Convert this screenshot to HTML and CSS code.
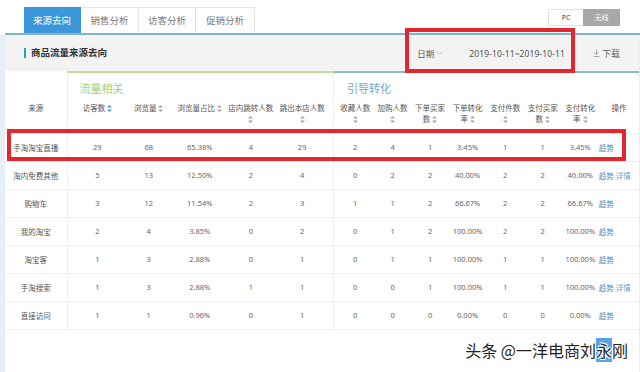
FILE: index.html
```html
<!DOCTYPE html>
<html lang="zh-CN">
<head>
	<meta charset="UTF-8">
	<meta name="viewport" content="width=device-width, initial-scale=1.0">
	<title>来源去向</title>
	<link rel="stylesheet" href="styles.css">
</head>
<body>
	<div class="page">
		<div class="topbar">
			<ul class="tabs">
				<li class="active">来源去向</li>
				<li>销售分析</li>
				<li>访客分析</li>
				<li>促销分析</li>
			</ul>
			<div class="switch"><span class="pc">PC</span><span class="wx">无线</span></div>
		</div>

		<div class="main">
			<div class="panel">
				<div class="panel-head">
					<h2 class="title">商品流量来源去向</h2>
					<div class="tools">
						<span class="date-label">日期<svg class="chev" width="7" height="4" viewBox="0 0 7 4"><polyline points="0.5,0.5 3.5,3.5 6.5,0.5"/></svg></span>
						<span class="date-range">2019-10-11~2019-10-11</span>
						<span class="download"><svg width="7" height="8" viewBox="0 0 7 8"><path d="M3.5 0.5V5.5M1.2 3.3L3.5 5.6L5.8 3.3M0.5 7.5H6.5"/></svg>下载</span>
					</div>
				</div>

				<table class="data">
					<colgroup>
						<col style="width:62px">
						<col style="width:56px"><col style="width:51px"><col style="width:51px"><col style="width:51px"><col style="width:57px">
						<col style="width:40px"><col style="width:38px"><col style="width:37px"><col style="width:38px"><col style="width:37px"><col style="width:38px"><col style="width:37px"><col style="width:40px">
					</colgroup>
					<thead>
						<tr class="group-row">
							<th></th>
							<th colspan="5" class="grp grp-flow">流量相关</th>
							<th colspan="8" class="grp grp-guide">引导转化</th>
						</tr>
						<tr class="label-row">
							<th>来源</th>
							<th class="first g1">访客数 <svg class="sort on" width="5" height="7" viewBox="0 0 5 7"><path d="M2.5 0L5 2.6H0ZM2.5 7L5 4.4H0Z"/></svg></th>
							<th>浏览量 <svg class="sort" width="5" height="7" viewBox="0 0 5 7"><path d="M2.5 0L5 2.6H0ZM2.5 7L5 4.4H0Z"/></svg></th>
							<th>浏览量占比 <svg class="sort" width="5" height="7" viewBox="0 0 5 7"><path d="M2.5 0L5 2.6H0ZM2.5 7L5 4.4H0Z"/></svg></th>
							<th>店内跳转人数<br><svg class="sort" width="5" height="7" viewBox="0 0 5 7"><path d="M2.5 0L5 2.6H0ZM2.5 7L5 4.4H0Z"/></svg></th>
							<th class="last">跳出本店人数<br><svg class="sort" width="5" height="7" viewBox="0 0 5 7"><path d="M2.5 0L5 2.6H0ZM2.5 7L5 4.4H0Z"/></svg></th>
							<th class="first g2">收藏人数<br><svg class="sort" width="5" height="7" viewBox="0 0 5 7"><path d="M2.5 0L5 2.6H0ZM2.5 7L5 4.4H0Z"/></svg></th>
							<th>加购人数<br><svg class="sort" width="5" height="7" viewBox="0 0 5 7"><path d="M2.5 0L5 2.6H0ZM2.5 7L5 4.4H0Z"/></svg></th>
							<th>下单买家<br>数 <svg class="sort" width="5" height="7" viewBox="0 0 5 7"><path d="M2.5 0L5 2.6H0ZM2.5 7L5 4.4H0Z"/></svg></th>
							<th>下单转化<br>率 <svg class="sort" width="5" height="7" viewBox="0 0 5 7"><path d="M2.5 0L5 2.6H0ZM2.5 7L5 4.4H0Z"/></svg></th>
							<th>支付件数<br><svg class="sort" width="5" height="7" viewBox="0 0 5 7"><path d="M2.5 0L5 2.6H0ZM2.5 7L5 4.4H0Z"/></svg></th>
							<th>支付买家<br>数 <svg class="sort" width="5" height="7" viewBox="0 0 5 7"><path d="M2.5 0L5 2.6H0ZM2.5 7L5 4.4H0Z"/></svg></th>
							<th>支付转化<br>率 <svg class="sort" width="5" height="7" viewBox="0 0 5 7"><path d="M2.5 0L5 2.6H0ZM2.5 7L5 4.4H0Z"/></svg></th>
							<th>操作</th>
						</tr>
					</thead>
					<tbody>
						<tr><td>手淘淘宝直播</td><td class="first g1">29</td><td>68</td><td>65.38%</td><td>4</td><td class="last">29</td><td class="first g2">2</td><td>4</td><td>1</td><td>3.45%</td><td>1</td><td>1</td><td>3.45%</td><td class="ops"><a>趋势</a></td></tr>
						<tr><td>淘内免费其他</td><td class="first g1">5</td><td>13</td><td>12.50%</td><td>2</td><td class="last">4</td><td class="first g2">0</td><td>2</td><td>2</td><td>40.00%</td><td>2</td><td>2</td><td>40.00%</td><td class="ops"><a>趋势</a> <a class="sub">详情</a></td></tr>
						<tr><td>购物车</td><td class="first g1">3</td><td>12</td><td>11.54%</td><td>2</td><td class="last">3</td><td class="first g2">1</td><td>1</td><td>2</td><td>66.67%</td><td>2</td><td>2</td><td>66.67%</td><td class="ops"><a>趋势</a></td></tr>
						<tr><td>我的淘宝</td><td class="first g1">2</td><td>4</td><td>3.85%</td><td>0</td><td class="last">2</td><td class="first g2">0</td><td>1</td><td>2</td><td>100.00%</td><td>2</td><td>2</td><td>100.00%</td><td class="ops"><a>趋势</a></td></tr>
						<tr><td>淘宝客</td><td class="first g1">1</td><td>3</td><td>2.88%</td><td>0</td><td class="last">1</td><td class="first g2">0</td><td>1</td><td>1</td><td>100.00%</td><td>1</td><td>1</td><td>100.00%</td><td class="ops"><a>趋势</a></td></tr>
						<tr><td>手淘搜索</td><td class="first g1">1</td><td>3</td><td>2.88%</td><td>1</td><td class="last">1</td><td class="first g2">0</td><td>0</td><td>1</td><td>100.00%</td><td>1</td><td>1</td><td>100.00%</td><td class="ops"><a>趋势</a> <a class="sub">详情</a></td></tr>
						<tr><td>直接访问</td><td class="first g1">1</td><td>1</td><td>0.96%</td><td>0</td><td class="last">1</td><td class="first g2">0</td><td>0</td><td>0</td><td>0.00%</td><td>0</td><td>0</td><td>0.00%</td><td class="ops"><a>趋势</a></td></tr>
					</tbody>
				</table>
			</div>
		</div>

		<!-- 标注框 -->
		<div class="mark mark-date"></div>
		<div class="mark mark-row"></div>

		<div class="watermark">头条 @一洋电商刘<span class="sel">永</span>刚</div>
	</div>
</body>
</html>
```

FILE: styles.css
```css
*{box-sizing: border-box;}
html, body{margin: 0; padding: 0;}
body{
	width: 640px; height: 372px; overflow: hidden;
	background: #fff;
	font-family: "Noto Sans", "Noto Sans CJK SC", sans-serif;
	color: #666;
}
.page{position: relative; height: 372px;}

/* 상단 탭 */
.topbar{
	display: flex; justify-content: space-between; align-items: flex-start;
	height: 35px; margin-left: 5px; padding: 7px 20px 0 19px;
	border-bottom: 2px solid #7fb4cc;
}
.tabs{display: flex; margin: 0; padding: 0; list-style: none;}
.tabs li{
	width: 57px; height: 26px; line-height: 25px;
	text-align: center; font-size: 9.5px; color: #777;
	border: 1px solid #e6e6e6; border-bottom: none; border-left: none;
	background: #fff;
}
.tabs li.active{background: #3b96da; color: #fff; border-color: #3b96da;}
.tabs li:nth-child(2){width: 58px;}
.tabs li:nth-child(4){width: 59px;}

.switch{display: flex; margin-top: 2px; font-size: 7px; line-height: 15px;}
.switch span{display: block; height: 17px; text-align: center;}
.switch .pc{width: 35px; color: #444; border: 1px solid #e2e2e2; border-right: none; background: #fff;}
.switch .wx{width: 37px; color: #fff; background: #a8a8a8; padding-top: 1px;}

/* 본문 */
.main{background: #e8eef5; padding-left: 5px; height: 337px;}
.panel{background: #fff; width: 634px; height: 337px;}

.panel-head{
	display: flex; justify-content: space-between; align-items: center;
	height: 36px; padding: 0 19px 0 19px;
	background: #f3f3f3;
}
.title{
	margin: 0; padding-left: 5px;
	font-size: 9.5px; font-weight: bold; color: #333;
	border-left: 2px solid #2fa2b2; line-height: 10px;
}
.tools{display: flex; align-items: center; font-size: 8.5px; color: #555;}
.date-label{display: flex; align-items: center; margin-right: 26px;}
.chev{margin-left: 2px; fill: none; stroke: #c4c4c4; stroke-width: 1;}
.date-range{margin-right: 28px; letter-spacing: 0.1px;}
.download{display: flex; align-items: center; font-size: 9px; color: #666;}
.download svg{margin-right: 2px; fill: none; stroke: #aaa; stroke-width: 1;}

/* 표 */
.data{
	width: 634px; table-layout: fixed; border-collapse: collapse;
	font-size: 7.5px; color: #666;
}
.data th, .data td{padding: 0; text-align: center; white-space: nowrap;}
.group-row th{height: 25px; vertical-align: bottom; padding-bottom: 1px; font-weight: normal;}
.grp{text-align: left !important; font-size: 11px; line-height: 14px;}
.grp-flow{border-top: 2px solid #bfdf99; color: #a6d173; padding-left: 12px !important; border-left: 1px solid #efefef;}
.grp-guide{border-top: 2px solid #86bcd3; color: #6ea9cb; padding-left: 13px !important; border-left: 1px solid #efefef;}

.label-row th{
	height: 36px; vertical-align: top; padding-top: 6px;
	font-weight: normal; color: #555; line-height: 11px;
	border-bottom: 1px solid #eee;
}
.sort{fill: #a5a5a5; vertical-align: -1px;}
.sort.on{fill: #4f93cf;}

.data td{height: 28px; border-bottom: 1px solid #eee;}
.data td:first-child{color: #555;}
.first{border-left: 1px solid #efefef;}
.g1{padding-left: 4px !important;}
.g2{padding-left: 3px !important;}
.last{padding-right: 5px !important;}
.data td.ops{text-align: left;}
.ops a{color: #3f8cc6;}
.ops a.sub{color: #6aa3c4;}

/* 빨간 표시 */
.mark{position: absolute; border: 4px solid #e4262d;}
.mark-date{left: 405px; top: 28px; width: 170px; height: 45px;}
.mark-row{left: 7px; top: 129px; width: 619px; height: 32px;}

.watermark{
	position: absolute; right: 12px; top: 339px;
	font-family: "Noto Sans CJK SC", sans-serif; font-size: 16px; line-height: 22px;
	color: #222;
	text-shadow: 1px 1px 0 #fff, -1px -1px 0 #fff, 1px -1px 0 #fff, -1px 1px 0 #fff;
}
.watermark .sel{background: #5aa2e2; color: #223;}
```
